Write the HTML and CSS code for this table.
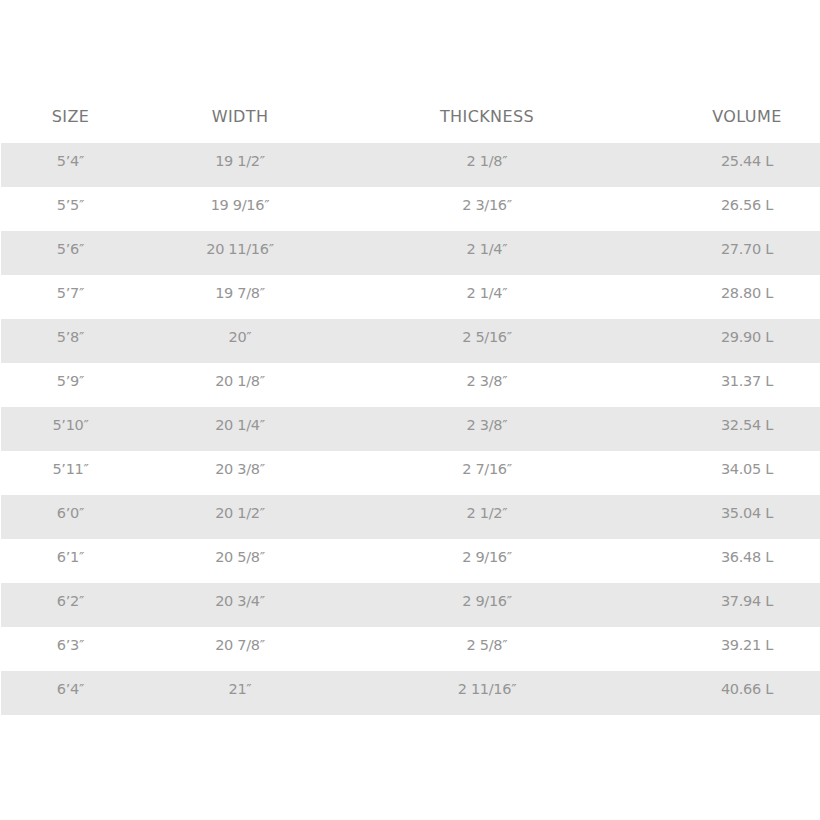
FILE: index.html
```html
<!DOCTYPE html>
<html>
<head>
<meta charset="utf-8">
<link rel="stylesheet" href="styles.css">
</head>
<body>
<div class="table">
  <div class="row head">
    <div class="c">SIZE</div><div class="c">WIDTH</div><div class="c">THICKNESS</div><div class="c v">VOLUME</div>
  </div>
  <div class="row g"><div class="c">5’4″</div><div class="c">19 1/2″</div><div class="c">2 1/8″</div><div class="c v">25.44 L</div></div>
  <div class="row"><div class="c">5’5″</div><div class="c">19 9/16″</div><div class="c">2 3/16″</div><div class="c v">26.56 L</div></div>
  <div class="row g"><div class="c">5’6″</div><div class="c">20 11/16″</div><div class="c">2 1/4″</div><div class="c v">27.70 L</div></div>
  <div class="row"><div class="c">5’7″</div><div class="c">19 7/8″</div><div class="c">2 1/4″</div><div class="c v">28.80 L</div></div>
  <div class="row g"><div class="c">5’8″</div><div class="c">20″</div><div class="c">2 5/16″</div><div class="c v">29.90 L</div></div>
  <div class="row"><div class="c">5’9″</div><div class="c">20 1/8″</div><div class="c">2 3/8″</div><div class="c v">31.37 L</div></div>
  <div class="row g"><div class="c">5’10″</div><div class="c">20 1/4″</div><div class="c">2 3/8″</div><div class="c v">32.54 L</div></div>
  <div class="row"><div class="c">5’11″</div><div class="c">20 3/8″</div><div class="c">2 7/16″</div><div class="c v">34.05 L</div></div>
  <div class="row g"><div class="c">6’0″</div><div class="c">20 1/2″</div><div class="c">2 1/2″</div><div class="c v">35.04 L</div></div>
  <div class="row"><div class="c">6’1″</div><div class="c">20 5/8″</div><div class="c">2 9/16″</div><div class="c v">36.48 L</div></div>
  <div class="row g"><div class="c">6’2″</div><div class="c">20 3/4″</div><div class="c">2 9/16″</div><div class="c v">37.94 L</div></div>
  <div class="row"><div class="c">6’3″</div><div class="c">20 7/8″</div><div class="c">2 5/8″</div><div class="c v">39.21 L</div></div>
  <div class="row g"><div class="c">6’4″</div><div class="c">21″</div><div class="c">2 11/16″</div><div class="c v">40.66 L</div></div>
</div>
</body>
</html>
```
FILE: styles.css
```css
html, body { margin: 0; padding: 0; background: #fff; }
body { font-family: "DejaVu Sans", "Liberation Sans", sans-serif; }
.table { padding: 99px 0 0 1px; }
.row {
  display: grid;
  grid-template-columns: 139px 200px 294px 1fr;
  height: 36px;
  padding-bottom: 8px;
  align-items: center;
  font-size: 14.5px;
  color: #959595;
  letter-spacing: -0.3px;
}
.row.g { background: #e8e8e8; }
.row.head { font-size: 16px; color: #777; letter-spacing: 0.4px; height: 34px; padding-bottom: 10px; }
.c { text-align: center; }
.c.v { padding-left: 40px; }
```
